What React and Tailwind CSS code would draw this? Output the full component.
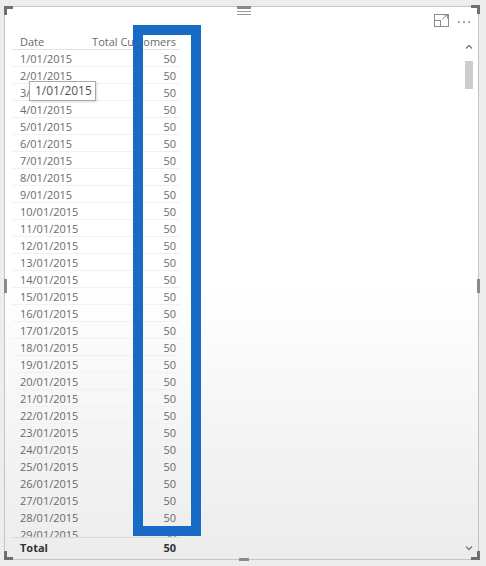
import React from "react";

const rows = Array.from({ length: 29 }, (_, i) => `${i + 1}/01/2015`);

function FocusIcon() {
  return (
    <svg width="15" height="13" viewBox="0 0 15 13" fill="none" stroke="#8a8a8a" strokeWidth="1">
      <rect x="0.5" y="0.5" width="14" height="12" />
      <rect x="0.5" y="6.5" width="6" height="6" />
      <path d="M8 5.5 L13 0.9 M9.5 0.9 H13.4 V4.5" />
    </svg>
  );
}

function Chevron({ down }) {
  return (
    <svg width="8" height="6" viewBox="0 0 8 6" fill="none" stroke="#7a7a7a" strokeWidth="1.4">
      <path d={down ? "M1 1.5 L4 4.5 L7 1.5" : "M1 4.5 L4 1.5 L7 4.5"} />
    </svg>
  );
}

export default function App() {
  return (
    <div
      className="relative h-[566px] w-[486px] overflow-hidden bg-[#ededed] pl-[4px] pt-[6px]"
      style={{ fontFamily: '"Open Sans", "Noto Sans", sans-serif' }}
    >
      {/* visual frame */}
      <div className="relative flex h-[554px] w-[475px] flex-col border border-[#c4c4c4] bg-gradient-to-b from-white via-white to-[#ececec]">
        {/* toolbar */}
        <div className="relative flex h-[27px] shrink-0 items-center justify-end gap-[9px] pr-[8px]">
          <div className="absolute left-[232px] top-[4px] flex flex-col gap-[2px]">
            <div className="h-px w-[14px] bg-[#9a9a9a]" />
            <div className="h-px w-[14px] bg-[#9a9a9a]" />
          </div>
          <FocusIcon />
          <div className="flex gap-[3px] pt-[2px]">
            <span className="h-[2px] w-[2px] rounded-full bg-[#8a8a8a]" />
            <span className="h-[2px] w-[2px] rounded-full bg-[#8a8a8a]" />
            <span className="h-[2px] w-[2px] rounded-full bg-[#8a8a8a]" />
          </div>
        </div>

        <div className="flex min-h-0 flex-1">
          {/* table */}
          <div className="ml-[7px] flex w-[168px] flex-col text-[11px] text-[#6a6a6a]">
            <div className="flex h-[16px] items-center justify-between border-b border-[#e2e2e2] pl-[8px] pr-[4px] leading-none">
              <span>Date</span>
              <span>Total Customers</span>
            </div>
            <div className="h-[487px] overflow-hidden">
              {rows.map((d) => (
                <div
                  key={d}
                  className="flex h-[17px] items-center justify-between border-b border-[#f1f1f1] pl-[8px] pr-[4px] leading-none"
                >
                  <span>{d}</span>
                  <span>50</span>
                </div>
              ))}
            </div>
            <div className="flex h-[19px] items-center justify-between border-t border-[#d8d8d8] pl-[8px] pr-[4px] text-[11px] font-bold leading-none text-[#333]">
              <span>Total</span>
              <span>50</span>
            </div>
          </div>

          {/* scrollbar */}
          <div className="ml-auto mr-[4px] flex w-[10px] flex-col items-center pb-[8px] pt-[10px]">
            <Chevron />
            <div className="mt-[11px] h-[28px] w-[8px] bg-[#cdcdcd]" />
            <div className="flex-1" />
            <Chevron down />
          </div>
        </div>

        {/* corner and side handles */}
        <div className="absolute -left-px -top-px h-[9px] w-[9px] border-l-[3px] border-t-[3px] border-[#6f6f6f]" />
        <div className="absolute -right-[2px] -top-[2px] h-[9px] w-[9px] border-r-[3px] border-t-[3px] border-[#6f6f6f]" />
        <div className="absolute -bottom-px -left-px h-[9px] w-[9px] border-b-[3px] border-l-[3px] border-[#6f6f6f]" />
        <div className="absolute -bottom-px -right-[2px] h-[9px] w-[9px] border-b-[3px] border-r-[3px] border-[#6f6f6f]" />
        <div className="absolute -top-px left-[232px] h-[3px] w-[14px] bg-[#8a8a8a]" />
        <div className="absolute -bottom-[2px] left-[234px] h-[3px] w-[10px] bg-[#8a8a8a]" />
        <div className="absolute -left-px top-[272px] h-[14px] w-[3px] bg-[#8a8a8a]" />
        <div className="absolute -right-[2px] top-[272px] h-[14px] w-[3px] bg-[#8a8a8a]" />
      </div>

      {/* tooltip */}
      <div className="absolute left-[29px] top-[81px] flex h-[20px] w-[67px] items-center border border-[#a8a8a8] bg-white pl-[5px] text-[12px] leading-none text-[#555] shadow-[1px_1px_2px_rgba(0,0,0,0.15)]">
        1/01/2015
      </div>

      {/* blue highlight */}
      <div className="absolute left-[133px] top-[25px] h-[511px] w-[68px] border-[10px] border-[#176bc4]" />
    </div>
  );
}
